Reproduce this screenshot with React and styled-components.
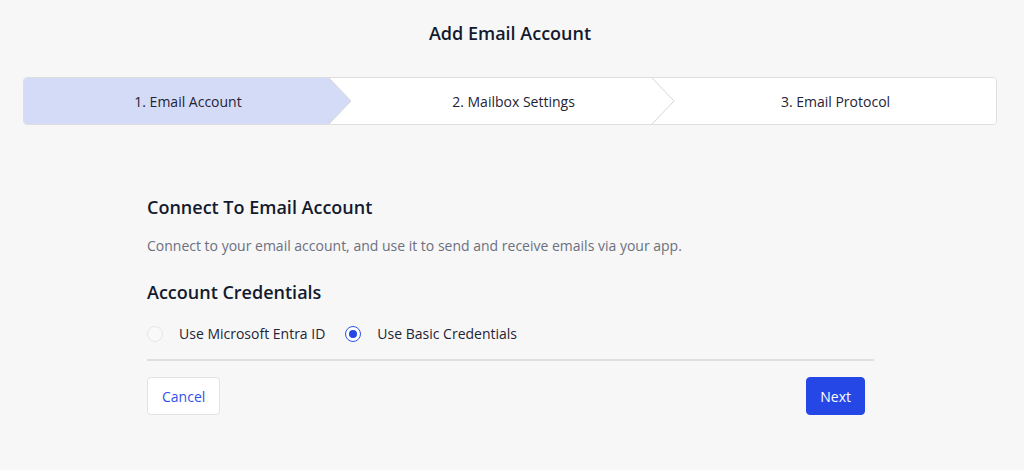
import React, { useState } from "react";
import styled, { createGlobalStyle } from "styled-components";

const GlobalStyle = createGlobalStyle`
  html, body {
    margin: 0;
    padding: 0;
    background: #f7f7f7;
    font-family: "Open Sans", "Noto Sans", sans-serif;
    color: #1b2033;
  }
`;

const Page = styled.div`
  width: 1024px;
  height: 470px;
  padding: 0 27px 0 23px;
  box-sizing: border-box;
`;

const Title = styled.h1`
  margin: 0;
  padding-top: 20px;
  height: 77px;
  box-sizing: border-box;
  text-align: center;
  font-size: 18px;
  line-height: 26px;
  font-weight: 600;
  color: #141a2e;
`;

const Stepper = styled.div`
  display: flex;
  height: 46px;
  border: 1px solid #dedede;
  border-radius: 4px;
  overflow: hidden;
  background: #fff;
`;

const Step = styled.div`
  position: relative;
  flex: 0 0 ${(p) => p.$width}px;
  display: flex;
  align-items: center;
  justify-content: center;
  font-size: 14px;
  color: #1f2436;
  background: ${(p) => (p.$active ? "#d4dbf7" : "#fff")};
`;

const Arrow = styled.svg`
  position: absolute;
  right: 0;
  top: 0;
  width: 23px;
  height: 100%;
`;

const Content = styled.div`
  width: 727px;
  margin: 0 0 0 124px;
  padding-top: 70px;
`;

const Heading = styled.h2`
  margin: 0;
  font-size: 18px;
  line-height: 24px;
  font-weight: 600;
  color: #141a2e;
`;

const Description = styled.p`
  margin: 17px 0 0;
  font-size: 14px;
  line-height: 20px;
  color: #6c7080;
`;

const SubHeading = styled(Heading)`
  margin-top: 24px;
`;

const RadioRow = styled.div`
  display: flex;
  align-items: center;
  gap: 20px;
  margin-top: 20px;
  padding-bottom: 15px;
  border-bottom: 2px solid #dfdfdf;
`;

const RadioLabel = styled.label`
  display: flex;
  align-items: center;
  gap: 16px;
  font-size: 14px;
  line-height: 20px;
  color: #1f2436;
  cursor: pointer;
`;

const RadioCircle = styled.span`
  width: 16px;
  height: 16px;
  box-sizing: border-box;
  border-radius: 50%;
  border: 1px solid ${(p) => (p.$checked ? "#2f52ea" : "#e6e6e6")};
  background: ${(p) => (p.$checked ? "#fff" : "#f9f9f9")};
  display: flex;
  align-items: center;
  justify-content: center;

  &::after {
    content: "";
    width: 8px;
    height: 8px;
    border-radius: 50%;
    background: #2447e6;
    display: ${(p) => (p.$checked ? "block" : "none")};
  }
`;

const Actions = styled.div`
  display: flex;
  justify-content: space-between;
  padding: 16px 9px 0 0;
`;

const Button = styled.button`
  height: 38px;
  padding: 0 ${(p) => (p.$primary ? "13px" : "14px")};
  border-radius: 4px;
  font-family: inherit;
  font-size: 14px;
  cursor: pointer;
  border: 1px solid ${(p) => (p.$primary ? "#2447e6" : "#e3e3e3")};
  background: ${(p) => (p.$primary ? "#2447e6" : "#fff")};
  color: ${(p) => (p.$primary ? "#fff" : "#3152ea")};
`;

const steps = [
  { label: "1. Email Account", width: 328 },
  { label: "2. Mailbox Settings", width: 323 },
  { label: "3. Email Protocol", width: 321 },
];

function StepArrow({ nextBg }) {
  return (
    <Arrow viewBox="0 0 23 46" preserveAspectRatio="none">
      <polygon points="0,0 23,0 23,46 0,46 22,23" fill={nextBg} />
      <polyline points="0,0 22,23 0,46" fill="none" stroke="#d6d6d6" strokeWidth="1" />
    </Arrow>
  );
}

export default function App() {
  const [mode, setMode] = useState("basic");

  return (
    <>
      <GlobalStyle />
      <Page>
        <Title>Add Email Account</Title>
        <Stepper>
          {steps.map((s, i) => (
            <Step key={s.label} $active={i === 0} $width={s.width}>
              {s.label}
              {i < steps.length - 1 && <StepArrow nextBg="#fff" />}
            </Step>
          ))}
        </Stepper>
        <Content>
          <Heading>Connect To Email Account</Heading>
          <Description>
            Connect to your email account, and use it to send and receive emails via your app.
          </Description>
          <SubHeading>Account Credentials</SubHeading>
          <RadioRow>
            <RadioLabel onClick={() => setMode("entra")}>
              <RadioCircle $checked={mode === "entra"} />
              Use Microsoft Entra ID
            </RadioLabel>
            <RadioLabel onClick={() => setMode("basic")}>
              <RadioCircle $checked={mode === "basic"} />
              Use Basic Credentials
            </RadioLabel>
          </RadioRow>
          <Actions>
            <Button>Cancel</Button>
            <Button $primary>Next</Button>
          </Actions>
        </Content>
      </Page>
    </>
  );
}
